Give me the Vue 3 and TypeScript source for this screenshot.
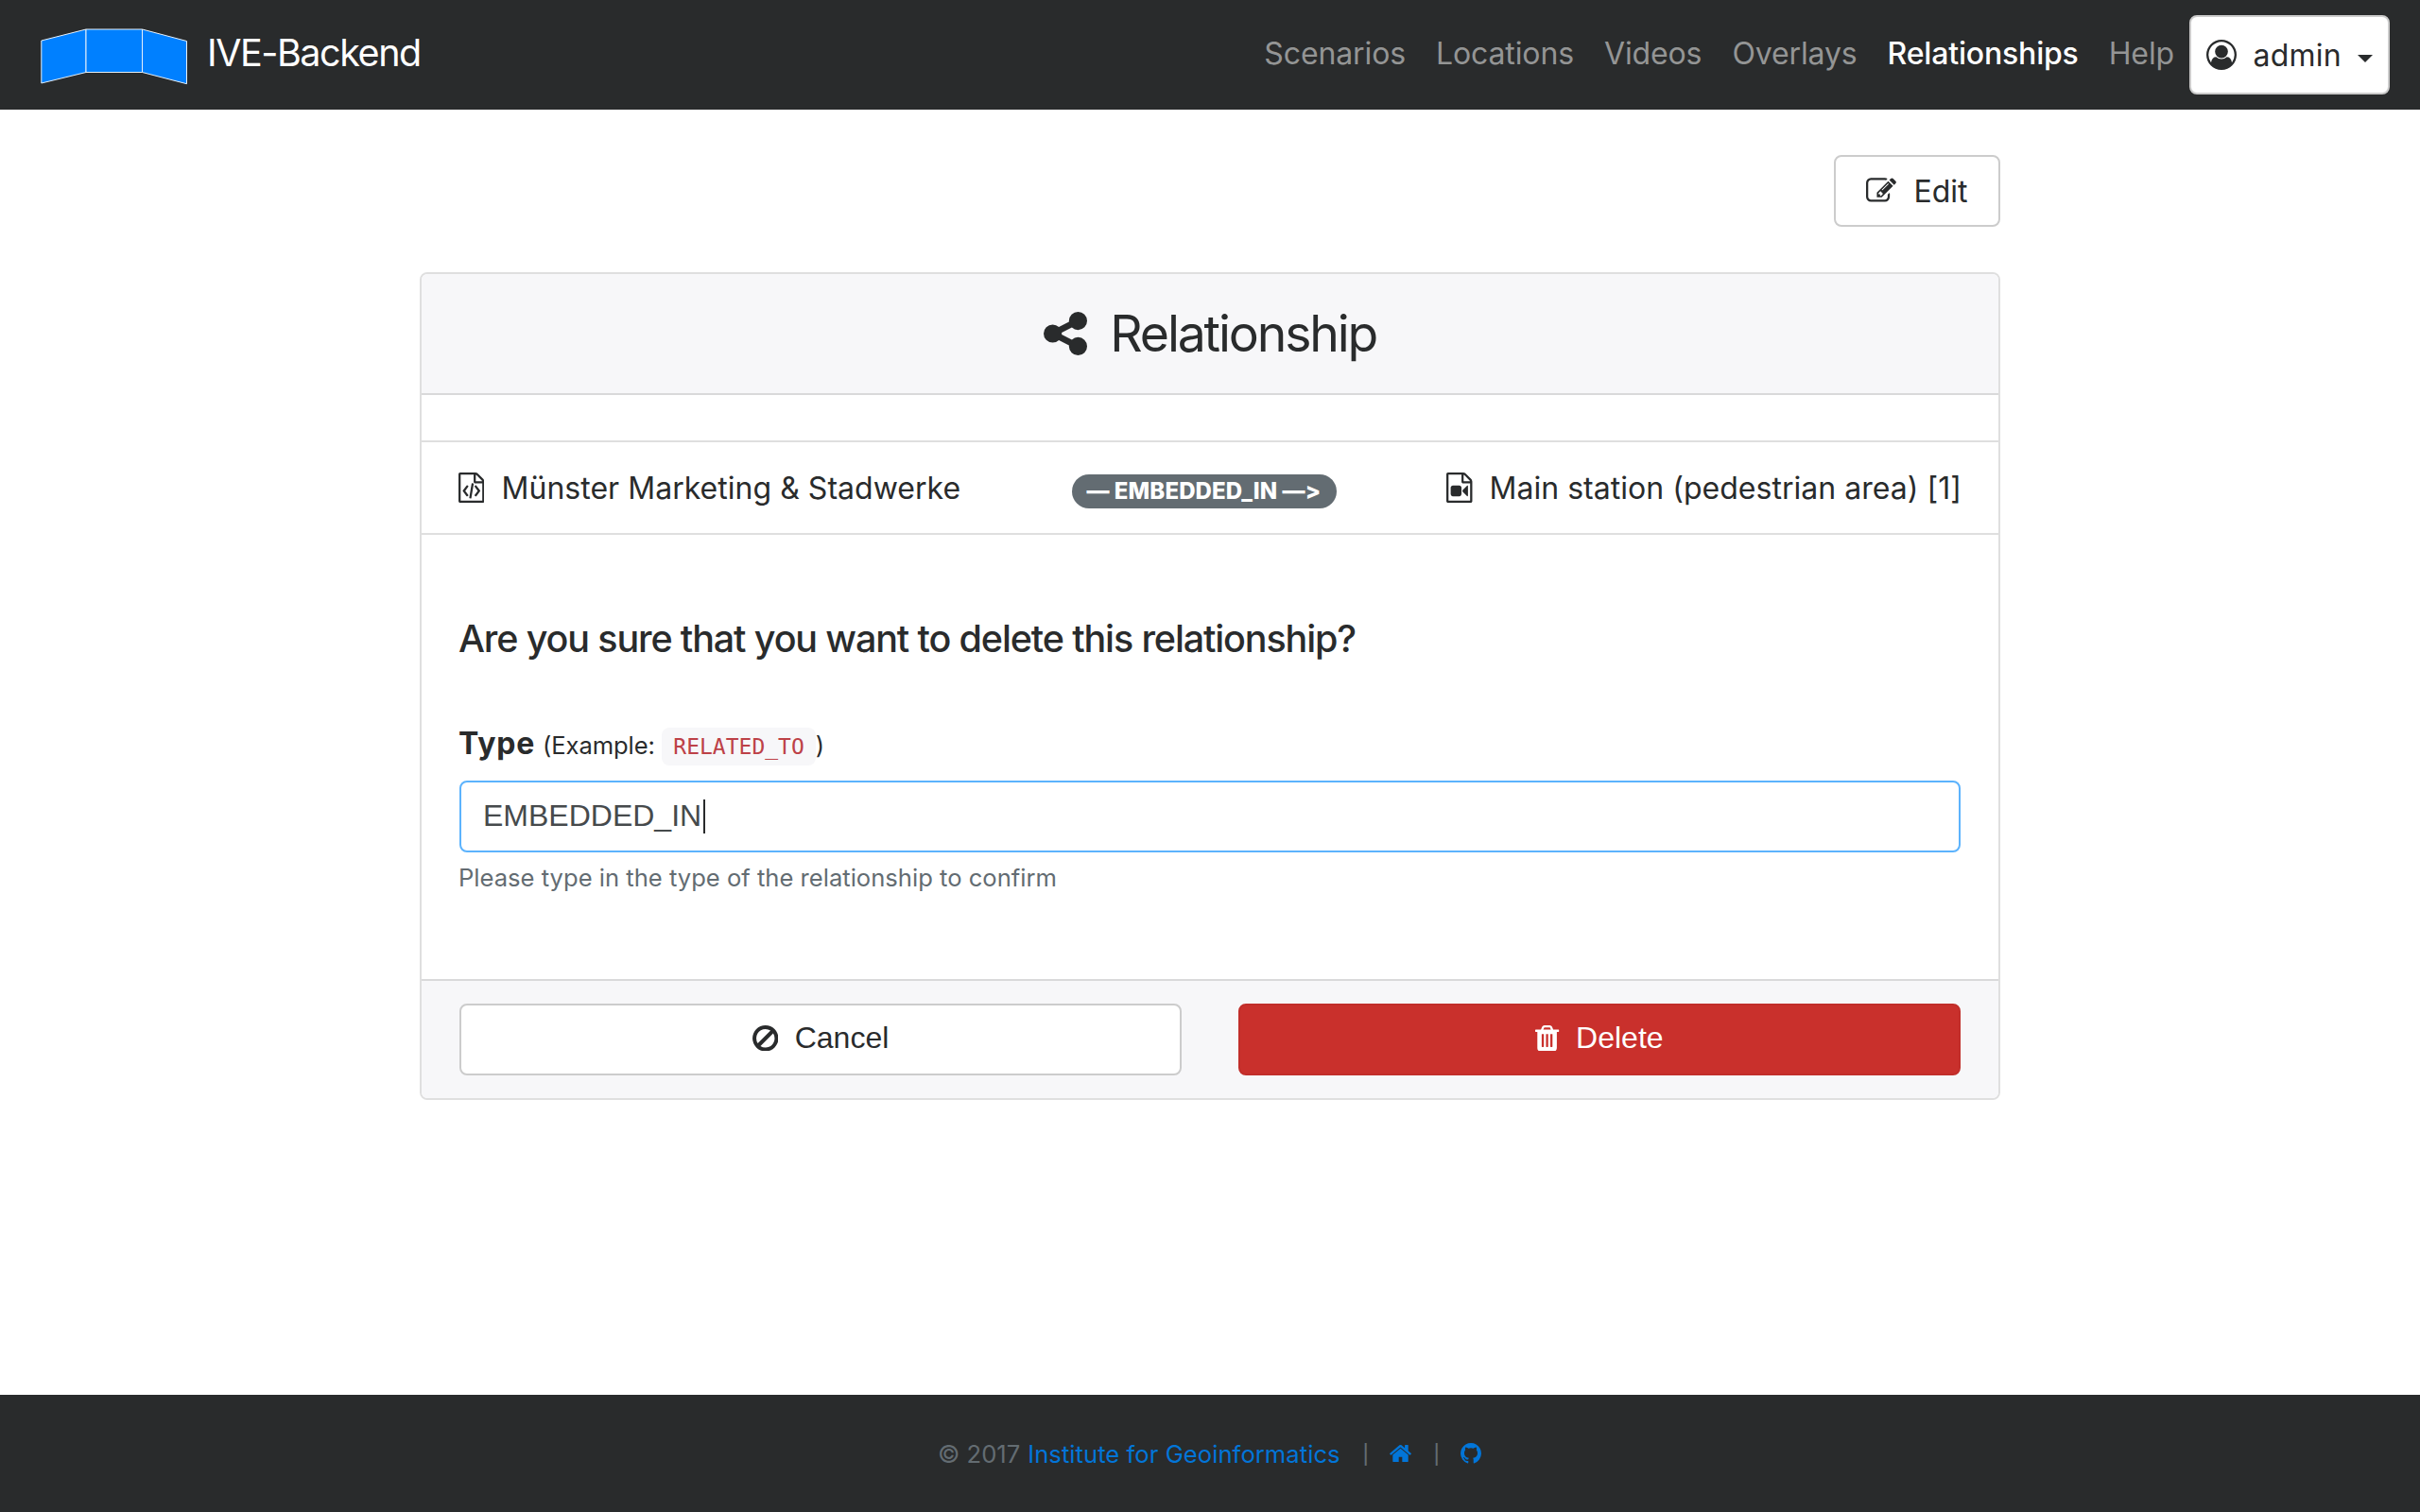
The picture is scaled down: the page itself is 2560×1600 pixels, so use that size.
<script lang="ts">
import { h } from 'vue'
</script>

<script setup lang="ts">
import { ref } from 'vue'

interface Glyph {
  box: string
  w: number
  h: number
  paths: string[]
  shift?: number
}

const page =
  'M1596 380q28 28 48 76t20 88v1152q0 40-28 68t-68 28h-1344q-40 0-68-28t-28-68v-1600q0-40 28-68t68-28h896q40 0 88 20t76 48zm-444-244v376h376q-10-29-22-41l-313-313q-12-12-41-22zm384 1528v-1024h-416q-40 0-68-28t-28-68v-416h-768v1536h1280z'

const glyphs: Record<string, Glyph> = {
  user: {
    box: '0 0 1792 1792', w: 32, h: 32,
    paths: ['M896 0q182 0 348 71t286 191 191 286 71 348q0 181-70.5 347t-190.5 286-286 191.5-349 71.5-349-71-285.5-191.5-190.5-286-71-347.5 71-348 191-286 286-191 348-71zm619 1351q149-205 149-455 0-156-61-298t-164-245-245-164-298-61-298 61-245 164-164 245-61 298q0 250 149 455 66-327 306-327 131 128 313 128t313-128q240 0 306 327zm-235-647q0-159-112.5-271.5t-271.5-112.5-271.5 112.5-112.5 271.5 112.5 271.5 271.5 112.5 271.5-112.5 112.5-271.5z'],
  },
  edit: {
    box: '0 0 1792 1792', w: 32, h: 32,
    paths: ['M888 1184l116-116-152-152-116 116v56h96v96h56zm440-720q-16-16-33 1l-350 350q-17 17-1 33t33-1l350-350q17-17 1-33zm80 594v190q0 119-84.5 203.5t-203.5 84.5h-832q-119 0-203.5-84.5t-84.5-203.5v-832q0-119 84.5-203.5t203.5-84.5h832q63 0 117 25 15 7 18 23 3 17-9 29l-49 49q-14 14-32 8-23-6-45-6h-832q-66 0-113 47t-47 113v832q0 66 47 113t113 47h832q66 0 113-47t47-113v-126q0-13 9-22l64-64q15-15 35-7t20 29zm-96-738l288 288-672 672h-288v-288zm444 132l-92 92-288-288 92-92q28-28 68-28t68 28l152 152q28 28 28 68t-28 68z'],
  },
  share: {
    box: '128 128 1536 1536', w: 46, h: 46,
    paths: ['M1344 1024q133 0 226.5 93.5t93.5 226.5-93.5 226.5-226.5 93.5-226.5-93.5-93.5-226.5q0-12 2-34l-360-180q-92 86-218 86-133 0-226.5-93.5t-93.5-226.5 93.5-226.5 226.5-93.5q126 0 218 86l360-180q-2-22-2-34 0-133 93.5-226.5t226.5-93.5 226.5 93.5 93.5 226.5-93.5 226.5-226.5 93.5q-126 0-218-86l-360 180q2 22 2 34t-2 34l360 180q92-86 218-86z'],
  },
  code: {
    box: '128 0 1536 1792', w: 27.5, h: 32, shift: 128,
    paths: [page, 'M480 768q8-11 21-12.5t24 6.5l51 38q11 8 12.5 21t-6.5 24l-182 243 182 243q8 11 6.5 24t-12.5 21l-51 38q-11 8-24 6.5t-21-12.5l-226-301q-14-19 0-38zm802 301q14 19 0 38l-226 301q-8 11-21 12.5t-24-6.5l-51-38q-11-8-12.5-21t6.5-24l182-243-182-243q-8-11-6.5-24t12.5-21l51-38q11-8 24-6.5t21 12.5zm-620 461q-13-2-20.5-13t-5.5-24l138-831q2-13 13-20.5t24-5.5l63 10q13 2 20.5 13t5.5 24l-138 831q-2 13-13 20.5t-24 5.5z'],
  },
  video: {
    box: '128 0 1536 1792', w: 27.5, h: 32, shift: 128,
    paths: [page, 'M768 768q52 0 90 38t38 90v384q0 52-38 90t-90 38h-384q-52 0-90-38t-38-90v-384q0-52 38-90t90-38h384zm492 2q20 8 20 30v576q0 22-20 30-8 2-12 2-14 0-23-9l-265-266v-90l265-266q9-9 23-9 4 0 12 2z'],
  },
  ban: {
    box: '128 123 1536 1541', w: 27.5, h: 27.5,
    paths: ['M1440 893q0-161-87-295l-754 753q137 89 297 89 111 0 211.5-43.5t173.5-116.5 116-174.5 43-212.5zm-999 299l755-754q-135-91-300-91-148 0-273 73t-198 199-73 274q0 162 89 299zm1223-299q0 157-61 300t-163.5 246-245 164-298.5 61-298.5-61-245-164-163.5-246-61-300 61-299.5 163.5-245.5 245-164 298.5-61 298.5 61 245 164 163.5 245.5 61 299.5z'],
  },
  trash: {
    box: '192 128 1408 1536', w: 25.2, h: 27.5,
    paths: ['M704 1376v-704q0-14-9-23t-23-9h-64q-14 0-23 9t-9 23v704q0 14 9 23t23 9h64q14 0 23-9t9-23zm256 0v-704q0-14-9-23t-23-9h-64q-14 0-23 9t-9 23v704q0 14 9 23t23 9h64q14 0 23-9t9-23zm256 0v-704q0-14-9-23t-23-9h-64q-14 0-23 9t-9 23v704q0 14 9 23t23 9h64q14 0 23-9t9-23zm-544-992h448l-48-117q-7-9-17-11h-317q-10 2-17 11zm928 32v64q0 14-9 23t-23 9h-96v948q0 83-47 143.5t-113 60.5h-832q-66 0-113-58.5t-47-141.5v-952h-96q-14 0-23-9t-9-23v-64q0-14 9-23t23-9h309l70-167q15-37 54-63t79-26h320q40 0 79 26t54 63l70 167h309q14 0 23 9t9 23z'],
  },
  home: {
    box: '89 256 1614 1280', w: 23, h: 18.3,
    paths: ['M1472 992v480q0 26-19 45t-45 19h-384v-384h-256v384h-384q-26 0-45-19t-19-45v-480q0-1 .5-3t.5-3l575-474 575 474q1 2 1 6zm223-69l-62 74q-8 9-21 11h-3q-13 0-21-7l-692-577-692 577q-12 8-24 7-13-2-21-11l-62-74q-8-10-7-23.5t11-21.5l719-599q32-26 76-26t76 26l244 204v-195q0-14 9-23t23-9h192q14 0 23 9t9 23v408l219 182q10 8 11 21.5t-7 23.5z'],
  },
  github: {
    box: '128 128 1536 1504', w: 22, h: 21.5,
    paths: ['M896 128q209 0 385.5 103t279.5 279.5 103 385.5q0 251-146.5 451.5t-378.5 277.5q-27 5-40-7t-13-30q0-3 .5-76.5t.5-134.5q0-97-52-142 57-6 102.5-18t94-39 81-66.5 53-105 20.5-150.5q0-119-79-206 37-91-8-204-28-9-81 11t-92 44l-38 24q-93-26-192-26t-192 26q-16-11-42.5-27t-83.5-38.5-85-13.5q-45 113-8 204-79 87-79 206 0 85 20.5 150t52.5 105 80.5 67 94 39 102.5 18q-39 36-49 103-21 10-45 15t-57 5-65.5-21.5-55.5-62.5q-19-32-48.5-52t-49.5-24l-20-3q-21 0-29 4.5t-5 11.5 9 14 13 12l7 5q22 10 43.5 38t31.5 51l10 23q13 38 44 61.5t67 30 69.5 7 55.5-3.5l23-4q0 38 .5 88.5t.5 54.5q0 18-13 30t-40 7q-232-77-378.5-277.5t-146.5-451.5q0-209 103-385.5t279.5-279.5 385.5-103z'],
  },
}

const Icon = (props: { name: string }) => {
  const g = glyphs[props.name]
  return h(
    'svg',
    { viewBox: g.box, width: g.w, height: g.h, fill: 'currentColor', 'aria-hidden': 'true', class: 'icon' },
    g.paths.map((d, i) =>
      h('path', { d, 'fill-rule': 'evenodd', transform: i > 0 && g.shift ? `translate(${g.shift} 0)` : undefined }),
    ),
  )
}
Icon.props = ['name']

const links = ['Scenarios', 'Locations', 'Videos', 'Overlays', 'Relationships', 'Help']
const active = ref('Relationships')
const relationType = ref('EMBEDDED_IN')
</script>

<template>
  <div class="app">
    <header class="navbar">
      <a class="brand">
        <svg class="logo" viewBox="0 0 156 60" width="156" height="60">
          <g fill="#0080ff" stroke="#e6f0fa" stroke-width="1" stroke-linejoin="round">
            <path d="M.8 13 48 1v45.500L.8 58z" />
            <path d="M154.500 13.500 107.500 1v45.500l47 12.200z" />
            <path d="M48 1h59.500v45.500H48z" />
          </g>
        </svg>
        <span class="brand-name">IVE-Backend</span>
      </a>
      <nav class="menu">
        <a v-for="l in links" :key="l" class="link" :class="{ active: l === active }">{{ l }}</a>
      </nav>
      <button class="account">
        <Icon name="user" />
        <span class="account-name">admin</span>
        <span class="caret"></span>
      </button>
    </header>

    <main class="content">
      <div class="toolbar">
        <a class="btn edit"><Icon name="edit" /><span>Edit</span></a>
      </div>

      <section class="card">
        <div class="card-header">
          <Icon name="share" />
          <h3 class="title">Relationship</h3>
        </div>
        <div class="spacer"></div>
        <div class="nodes">
          <div class="node from"><Icon name="code" /><span>Münster Marketing &amp; Stadwerke</span></div>
          <span class="badge">— {{ relationType }} —&gt;</span>
          <div class="node to"><Icon name="video" /><span>Main station (pedestrian area) [1]</span></div>
        </div>
        <div class="card-body">
          <h5 class="question">Are you sure that you want to delete this relationship?</h5>
          <label class="label">
            <strong>Type</strong>
            <small class="example">(Example:</small>
            <code>RELATED_TO</code>
            <small class="close">)</small>
          </label>
          <div class="input"><span>{{ relationType }}</span><i class="cursor"></i></div>
          <p class="help">Please type in the type of the relationship to confirm</p>
        </div>
        <div class="card-footer">
          <button class="btn cancel"><Icon name="ban" /><span>Cancel</span></button>
          <button class="btn delete"><Icon name="trash" /><span>Delete</span></button>
        </div>
      </section>
    </main>

    <footer class="footer">
      <span class="copy">© 2017</span>
      <a class="institute">Institute for Geoinformatics</a>
      <span class="bar">|</span>
      <a class="home"><Icon name="home" /></a>
      <span class="bar">|</span>
      <a class="github"><Icon name="github" /></a>
    </footer>
  </div>
</template>

<style>
body {
  background: #fff;
}
.icon {
  display: block;
  flex: none;
}
</style>

<style scoped>
.app {
  display: flex;
  flex-direction: column;
  width: 2560px;
  height: 1600px;
  box-sizing: border-box;
  font-family: Inter, "Liberation Sans", sans-serif;
  font-size: 32px;
  line-height: 48px;
  color: #292b2c;
  white-space: nowrap;
}
.app * {
  box-sizing: border-box;
}
h3, h5, p {
  margin: 0;
}

.navbar {
  display: flex;
  align-items: center;
  height: 116px;
  padding: 0 32px 0 43px;
  background: #292b2c;
}
.brand {
  display: flex;
  align-items: center;
  gap: 20px;
  color: #fff;
}
.brand-name {
  font-size: 39.500px;
  letter-spacing: -1.45px;
  margin-top: -5px;
}
.logo {
  display: block;
  margin-top: 3px;
}
.menu {
  display: flex;
  gap: 32px;
  margin: -2px 16px 0 auto;
}
.link {
  color: #949595;
  letter-spacing: -0.12px;
}
.link.active {
  color: #fff;
  font-weight: 500;
  letter-spacing: -0.18px;
}
.account {
  display: flex;
  align-items: center;
  width: 212px;
  height: 84px;
  padding: 0 0 0 15.500px;
  border: 2px solid #ccc;
  border-radius: 8px;
  background: #fff;
  color: #292b2c;
  font: inherit;
}
.account-name {
  margin: 2px 0 0 18px;
  letter-spacing: 0.2px;
}
.caret {
  margin: 7px 0 0 17.500px;
  border: 8px solid transparent;
  border-top: 8px solid #292b2c;
  border-bottom: 0;
}

.content {
  display: flex;
  flex-direction: column;
  flex: 1;
  width: 1672px;
  margin: 0 auto;
  padding-top: 48px;
}
.toolbar {
  display: flex;
  justify-content: flex-end;
  margin-bottom: 48px;
}
.btn {
  display: flex;
  align-items: center;
  justify-content: center;
  height: 76px;
  padding: 0;
  border: 2px solid #ccc;
  border-radius: 8px;
  background: #fff;
  color: #292b2c;
  font-size: 32px;
}
.edit {
  width: 176px;
  gap: 18px;
}
.edit span {
  margin-top: 2px;
}

.card {
  display: flex;
  flex-direction: column;
  height: 876px;
  border: 2px solid #dfdfdf;
  border-radius: 8px;
  overflow: hidden;
}
.card-header {
  display: flex;
  align-items: center;
  justify-content: center;
  gap: 24.500px;
  height: 128px;
  border-bottom: 2px solid #d9d9da;
  background: #f7f7f9;
}
.title {
  font-size: 53.500px;
  font-weight: 400;
  letter-spacing: -2.15px;
  line-height: 60px;
}
.spacer {
  height: 50px;
  border-bottom: 2px solid #dfdfdf;
}
.nodes {
  display: flex;
  align-items: center;
  justify-content: space-between;
  height: 98px;
  padding: 0 39px 0 38.500px;
  border-bottom: 2px solid #dfdfdf;
}
.node {
  display: flex;
  align-items: center;
  gap: 17.500px;
}
.node span {
  margin-top: 1px;
  letter-spacing: 0.03px;
}
.from span {
  margin-left: 1px;
}
.badge {
  width: 280px;
  height: 36px;
  margin: 8px -1px 0 1px;
  padding-right: 2px;
  border-radius: 18px;
  background: #636c72;
  color: #fff;
  font-size: 24px;
  font-weight: 800;
  font-variant-ligatures: none;
  font-feature-settings: "calt" 0;
  line-height: 35px;
  text-align: center;
  letter-spacing: 0.1px;
}
.card-body {
  flex: 1;
  padding: 86px 40px 0;
}
.question {
  margin-left: -1px;
  font-size: 39.500px;
  font-weight: 500;
  letter-spacing: -1.14px;
}
.label {
  display: flex;
  align-items: baseline;
  margin: 63px 0 0 -1px;
}
.label strong {
  letter-spacing: 0.8px;
}
.example {
  margin-left: 8px;
  font-size: 25.600px;
  letter-spacing: -0.1px;
}
code {
  margin-left: 7.500px;
  padding: 6px 12px;
  border-radius: 8px;
  background: #f7f7f9;
  color: #bd4147;
  font-family: "DejaVu Sans Mono", monospace;
  font-size: 23px;
  line-height: 28px;
}
.close {
  font-size: 25.600px;
}
.input {
  display: flex;
  align-items: center;
  height: 76px;
  margin-top: 13px;
  padding: 0 23px;
  border: 2px solid #5cb3fd;
  border-radius: 8px;
  color: #464a4c;
  font-family: "Liberation Sans", Arial, sans-serif;
}
.input span {
  margin-top: -3px;
}
.cursor {
  width: 2px;
  height: 36px;
  margin-left: 2px;
  background: #292b2c;
}
.help {
  margin: 7px 0 0 -1px;
  color: #636c72;
  font-size: 25.600px;
  line-height: 40px;
}
.card-footer {
  display: flex;
  gap: 60px;
  height: 126px;
  padding: 24px 40px;
  border-top: 2px solid #d9d9da;
  background: #f7f7f9;
}
.card-footer .btn {
  flex: 1;
  gap: 17.500px;
  padding-bottom: 3px;
  font-family: "Liberation Sans", Arial, sans-serif;
}
.card-footer .delete {
  border-color: #c12e2a;
  background: #c9302c;
  color: #fff;
}

.footer {
  display: flex;
  align-items: center;
  height: 124px;
  padding-left: 992px;
  background: #292b2c;
  color: #636c72;
  font-size: 25.600px;
}
.copy,
.institute,
.bar {
  padding-top: 2px;
}
.institute,
.home,
.github {
  color: #0275d8;
}
.institute {
  margin: 0 23.500px 0 8px;
  letter-spacing: 0.05px;
}
.bar {
  width: 7px;
  font-size: 20px;
  font-weight: 500;
  text-align: center;
}
.home,
.github {
  margin: 0 23px 0 22px;
}
</style>
